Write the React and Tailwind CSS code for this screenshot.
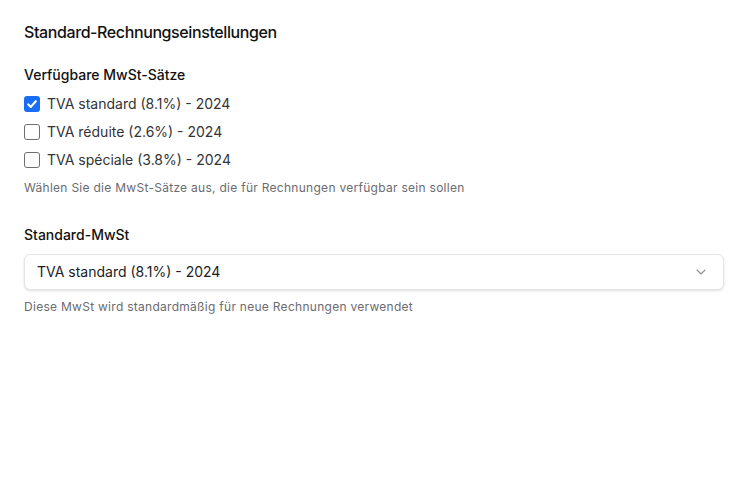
import React, { useState } from 'react';

const rates = [
    { id: 'std', label: 'TVA standard (8.1%) - 2024' },
    { id: 'red', label: 'TVA réduite (2.6%) - 2024' },
    { id: 'spe', label: 'TVA spéciale (3.8%) - 2024' },
];

function Checkbox({ checked, onChange, label }) {
    return (
        <label className="flex items-center h-5 cursor-pointer">
            <span
                onClick={onChange}
                className={
                    checked
                        ? 'w-4 h-4 rounded-[3px] bg-[#1a6ef5] flex items-center justify-center'
                        : 'w-4 h-4 rounded-[3px] border border-[#6e6e73] bg-white'
                }
            >
                {checked && (
                    <svg width="12" height="12" viewBox="0 0 12 12" fill="none">
                        <path d="M2.3 6.4 L4.8 8.9 L9.8 3.2" stroke="white" strokeWidth="2.1" strokeLinecap="round" strokeLinejoin="round" />
                    </svg>
                )}
            </span>
            <span className="ml-[7px] text-sm text-[#333336]">{label}</span>
        </label>
    );
}

export default function App() {
    const [selected, setSelected] = useState(['std']);
    const [def, setDef] = useState('std');

    const toggle = (id) => {
        setSelected((s) => (s.includes(id) ? s.filter((x) => x !== id) : [...s, id]));
    };

    return (
        <div className="w-[748px] h-[480px] bg-white px-6 pt-5 font-['Inter','Liberation_Sans',sans-serif] antialiased">
            <h2 className="text-base leading-6 font-medium tracking-tight text-[#111111]">Standard-Rechnungseinstellungen</h2>

            <div className="mt-[21px] text-sm leading-5 font-medium text-[#111111]">Verfügbare MwSt-Sätze</div>
            <div className="mt-[9px] flex flex-col gap-2">
                {rates.map((r) => (
                    <Checkbox
                        key={r.id}
                        label={r.label}
                        checked={selected.includes(r.id)}
                        onChange={() => toggle(r.id)}
                    />
                ))}
            </div>
            <p className="mt-2.5 text-xs leading-4 tracking-[0.28px] text-[#6b6b70]">
                Wählen Sie die MwSt-Sätze aus, die für Rechnungen verfügbar sein sollen
            </p>

            <div className="mt-[29px] text-sm leading-5 font-medium text-[#111111]">Standard-MwSt</div>
            <div className="mt-[9px] h-9 rounded-md border border-[#e5e5e7] bg-white shadow-sm flex items-center justify-between pl-3 pr-3">
                <span className="text-sm text-[#1c1c1e]">
                    {rates.find((r) => r.id === def).label}
                </span>
                <svg width="16" height="16" viewBox="0 0 24 24" fill="none" stroke="#8e8e93" strokeWidth="1.6" strokeLinecap="round" strokeLinejoin="round" className="mr-0.5" onClick={() => setDef('std')}>
                    <path d="M6 9l6 6 6-6" />
                </svg>
            </div>
            <p className="mt-[9px] text-xs leading-4 tracking-[0.28px] text-[#6b6b70]">
                Diese MwSt wird standardmäßig für neue Rechnungen verwendet
            </p>
        </div>
    );
}
